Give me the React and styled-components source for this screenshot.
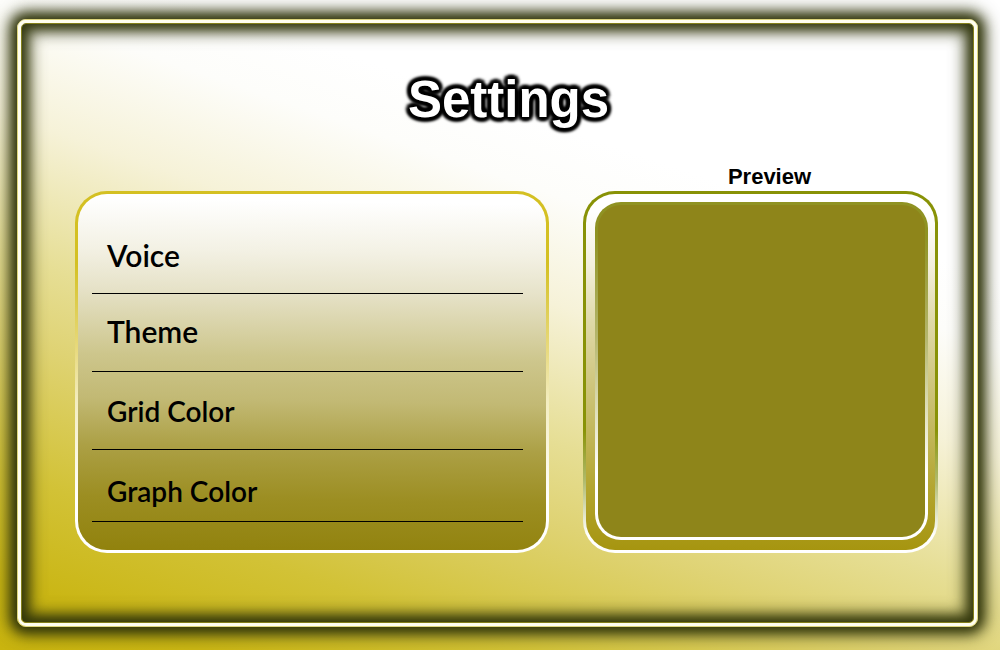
import React from 'react';
import styled, { createGlobalStyle } from 'styled-components';

const GlobalStyle = createGlobalStyle`
  *, *::before, *::after { box-sizing: border-box; }
  body { margin: 0; font-family: "Lato", sans-serif; color: #000; }
`;

const Page = styled.div`
  display: flex;
  min-height: 100vh;
  padding: 19px 22px 23px 17px;
  background: linear-gradient(19deg, #c9b40f 0%, #cab614 7%, #d2c236 18%, #dfd374 32%, #e6de94 40%, #f6f2d8 54%, #fdfdfa 65%, #fff 72%);
`;

const Frame = styled.div`
  flex: 1;
  display: flex;
  border: 1px solid #ded67c;
  border-radius: 9px;
  box-shadow: 0 0 16px 8px #30340acc, 0 0 12px 3px #30340a;
`;

const FrameLine = styled.div`
  flex: 1;
  display: flex;
  border: 3px solid #fffef0;
  border-radius: 8px;
`;

const Content = styled.main`
  flex: 1;
  display: flex;
  flex-direction: column;
  padding: 40px 35px 69px 53px;
  border: 1px solid #84801a;
  border-radius: 5px;
  box-shadow: inset 0 0 16px 8px #30340acc, inset 0 0 12px 3px #30340a;
`;

const Title = styled.h1`
  margin: 0;
  padding-left: 4px;
  text-align: center;
  font: bold 51px/72px "Liberation Sans Narrow", "Arial Narrow", "Liberation Sans", sans-serif;
  color: #fff;
  text-shadow:
    0 -4px 3px #000, 0 4px 3px #000, -4px 0 3px #000, 4px 0 3px #000,
    -3px -3px 3px #000, 3px -3px 3px #000, -3px 3px 3px #000, 3px 3px 3px #000,
    0 0 2px #000, 0 0 4px #000;
`;

const Columns = styled.div`
  flex: 1;
  display: grid;
  grid-template-columns: 474fr 355fr;
  grid-template-rows: auto 1fr;
  column-gap: 34px;
  padding-top: 27px;
`;

const PreviewTitle = styled.h2`
  grid-column: 2;
  margin: 0;
  padding-left: 18px;
  text-align: center;
  font: bold 22px/28px "Liberation Sans Narrow", "Arial Narrow", "Liberation Sans", sans-serif;
`;

const Panel = styled.section`
  border: 3px solid transparent;
  border-radius: 32px;
`;

const OptionPanel = styled(Panel)`
  padding: 24px 23px 28px 14px;
  background:
    linear-gradient(181deg, #fff 3%, #f3f1e4 17%, #e6e2c8 28%, #cdc68c 46%, #c2b974 58%, #aca045 71%, #9c8e22 85%, #91820d 100%) padding-box,
    linear-gradient(#d4c022 20%, #e8da7e 44%, #f3edc0 58%, #fff 85%) border-box;
`;

const OptionList = styled.ul`
  margin: 0;
  padding: 0;
  list-style: none;
`;

const Option = styled.li`
  display: flex;
  align-items: flex-end;
  height: ${(p) => p.$height}px;
  padding: 0 15px ${(p) => p.$gap}px;
  border-bottom: 1px solid #000;
  font-size: ${(p) => p.$size}px;
  line-height: 36px;
  font-weight: 600;
`;

const PreviewPanel = styled(Panel)`
  display: flex;
  padding: 8px 7px 10px 9px;
  background:
    linear-gradient(#fff 5%, #f3efdc 20%, #dfd9a8 36%, #c4b960 65%, #b3a52f 83%, #a69510 100%) padding-box,
    linear-gradient(#889206 66%, #b0ba6c 80%, #fff 95%) border-box;
`;

const Swatch = styled.div`
  flex: 1;
  border: 3px solid transparent;
  border-radius: 26px;
  background:
    linear-gradient(#8e851a, #8e851a) padding-box,
    linear-gradient(#8f9222 10%, #b4b66c 40%, #dcdcb4 60%, #fff 80%) border-box;
`;

const options = [
  { label: 'Voice', height: 76, gap: 20, size: 30 },
  { label: 'Theme', height: 78, gap: 22, size: 30 },
  { label: 'Grid Color', height: 78, gap: 20, size: 28 },
  { label: 'Graph Color', height: 72, gap: 12, size: 28 },
];

export default function App() {
  return (
    <>
      <GlobalStyle />
      <Page>
        <Frame>
          <FrameLine>
            <Content>
              <Title>Settings</Title>
              <Columns>
                <PreviewTitle>Preview</PreviewTitle>
                <OptionPanel aria-label="Options">
                  <OptionList>
                    {options.map((o) => (
                      <Option key={o.label} $height={o.height} $gap={o.gap} $size={o.size}>
                        {o.label}
                      </Option>
                    ))}
                  </OptionList>
                </OptionPanel>
                <PreviewPanel aria-label="Preview">
                  <Swatch />
                </PreviewPanel>
              </Columns>
            </Content>
          </FrameLine>
        </Frame>
      </Page>
    </>
  );
}
